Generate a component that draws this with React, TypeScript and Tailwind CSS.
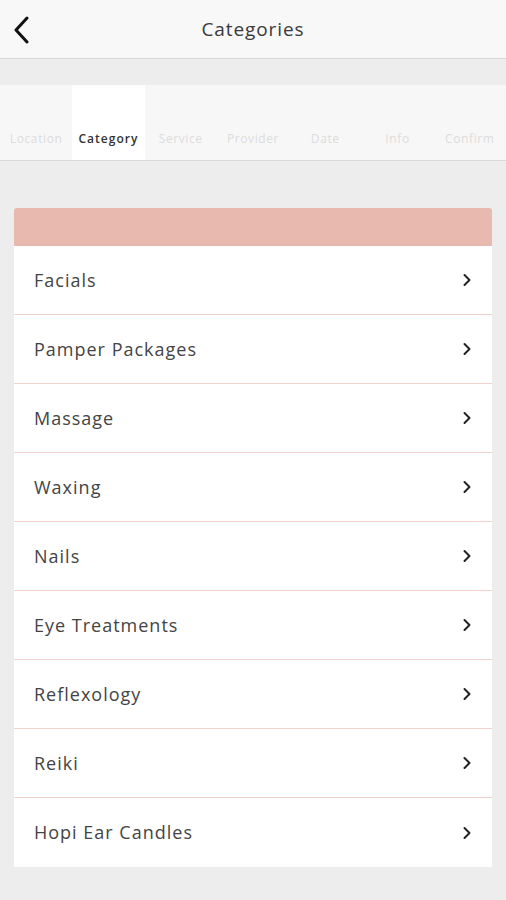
import React from 'react';

const steps = ['Location', 'Category', 'Service', 'Provider', 'Date', 'Info', 'Confirm'];

const categories = [
    'Facials',
    'Pamper Packages',
    'Massage',
    'Waxing',
    'Nails',
    'Eye Treatments',
    'Reflexology',
    'Reiki',
    'Hopi Ear Candles',
];

export default function App() {
    const active = 'Category';

    return (
        <div className="w-[506px] h-[900px] bg-[#ededed] flex flex-col font-['Open_Sans','Noto_Sans',sans-serif]">
            {/* HEADER */}
            <div className="h-[59px] bg-[#f8f8f8] border-b border-[#d6d6d6] flex items-center relative shrink-0">
                <button className="absolute left-[10px] top-[15px] w-[22px] h-[30px] flex items-center justify-center">
                    <svg width="18" height="28" viewBox="0 0 18 28" fill="none">
                        <path d="M15 2 L4 14 L15 26" stroke="#111" strokeWidth="3" strokeLinecap="round" strokeLinejoin="round" />
                    </svg>
                </button>
                <h1 className="w-full text-center text-[19px] text-[#3a3a3a] tracking-[0.9px]">Categories</h1>
            </div>

            {/* STEPS */}
            <div className="mt-[26px] h-[76px] bg-[#f7f7f7] border-b border-[#d9d9d9] flex shrink-0">
                {steps.map((s) => (
                    <div
                        key={s}
                        className={`flex-1 flex items-end justify-center pb-[12px] text-[12px] ${
                            s === active ? 'bg-white text-[#333] font-semibold tracking-[1px]' : 'text-[#dcdcdc] tracking-[0.6px]'
                        }`}
                    >
                        {s}
                    </div>
                ))}
            </div>

            {/* LIST */}
            <div className="mx-[14px] mt-[47px] rounded-t-[3px] overflow-hidden">
                <div className="h-[38px] bg-[#e8b9ae]" />
                {categories.map((c, i) => (
                    <div
                        key={c}
                        className={`h-[69px] bg-white flex items-center justify-between pl-[20px] pr-[20px] ${
                            i < categories.length - 1 ? 'border-b border-[#f1d2ca]' : ''
                        }`}
                    >
                        <span className="text-[18px] text-[#444] tracking-[1px]">{c}</span>
                        <svg width="10" height="14" viewBox="0 0 10 14" fill="none">
                            <path d="M2.5 2 L7.5 7 L2.5 12" stroke="#222" strokeWidth="2" strokeLinecap="round" strokeLinejoin="round" />
                        </svg>
                    </div>
                ))}
            </div>
        </div>
    );
}
